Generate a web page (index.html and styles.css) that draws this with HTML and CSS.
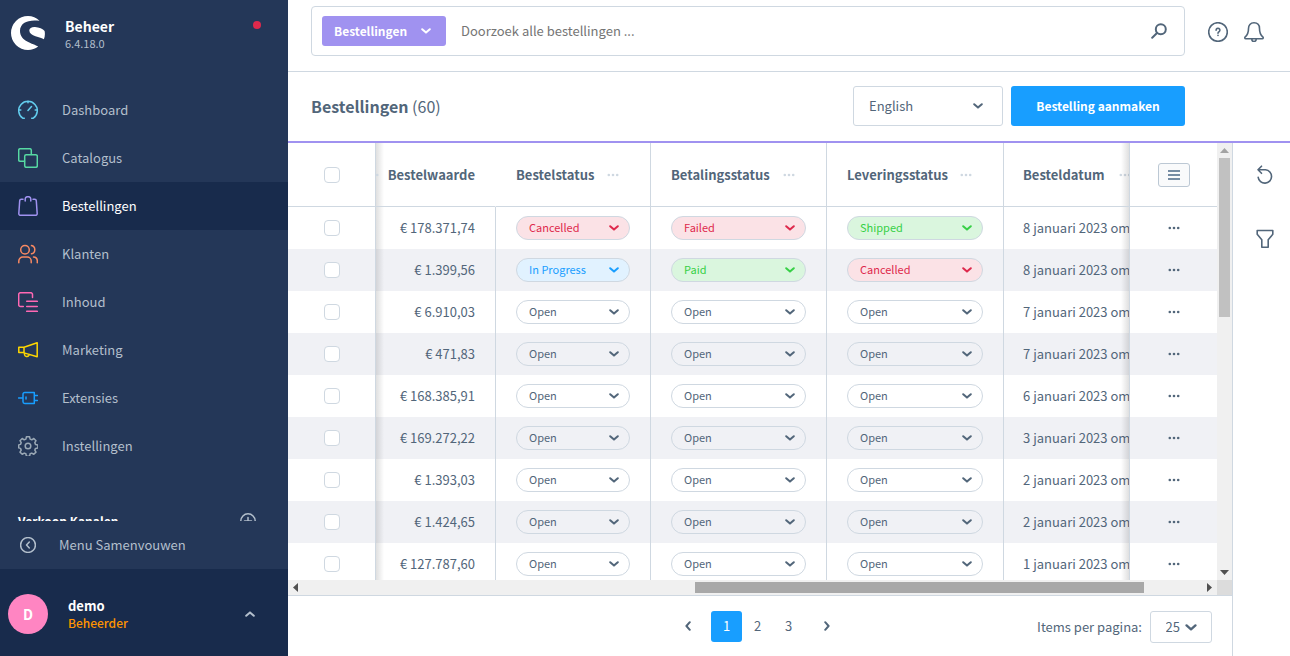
FILE: index.html
```html
<!DOCTYPE html>
<html lang="nl">
<head>
<meta charset="utf-8">
<title>Bestellingen</title>
<link rel="stylesheet" href="styles.css">
</head>
<body>
<svg class="sprite" aria-hidden="true">
  <symbol id="chev" viewBox="0 0 10 6"><path d="M1.200 1.200L5 4.600 8.800 1.200" fill="none" stroke="currentColor" stroke-width="2" stroke-linecap="round" stroke-linejoin="round"/></symbol>
  <symbol id="dots" viewBox="0 0 12 4"><circle cx="1.800" cy="2" r="1.300"/><circle cx="6" cy="2" r="1.300"/><circle cx="10.200" cy="2" r="1.300"/></symbol>
</svg>
<aside class="sidebar">
  <header class="brand">
    <svg class="logo" viewBox="0 0 34 34" fill="#fff"><path d="M28.500 4.800C25.500 1.800 21.400 0 17 0a17 17 0 0 0 0 34c3.900 0 7.300-1.300 10.200-3.500C22.500 27.500 9 25.500 9 15 9 6.500 17.500 3.300 28.500 4.800z"/><path d="M18.300 14.500c0-2.300 2.500-3.700 5.700-3.500 4 .3 8 2 9.600 4 .6 3 .3 6-.7 8.300-3-2-14.600-3.300-14.600-8.800z"/></svg>
    <div class="brand-text"><strong>Beheer</strong><span>6.4.18.0</span></div>
    <i class="status-dot"></i>
  </header>
  <nav class="nav">
    <a href="#"><svg class="c-cyan" viewBox="0 0 20 20"><path d="M6.300 18.200H4.700A9.300 9.300 0 1 1 15.300 18.200H13.700M1 10h1.800M17.200 10H19M10 1v1.800M10 10.500l3.500-4"/></svg>Dashboard</a>
    <a href="#"><svg class="c-green" viewBox="0 0 20 20"><rect x="6.700" y="6.700" width="12.600" height="12.600" rx="1.500"/><path d="M6.500 13.300H2.200A1.500 1.500 0 0 1 .7 11.800V2.200A1.500 1.500 0 0 1 2.200.7h9.600a1.500 1.500 0 0 1 1.500 1.500v4.300"/></svg>Catalogus</a>
    <a href="#" class="active"><svg class="c-purple" viewBox="0 0 20 20"><path d="M7.200 5V3a2.300 2.300 0 0 1 2.300-2.300h1A2.300 2.300 0 0 1 12.800 3v2M5 3.300H3.200A1.500 1.500 0 0 0 1.700 4.700L.8 17.700a1.500 1.500 0 0 0 1.500 1.600h15.400a1.500 1.500 0 0 0 1.500-1.600l-.9-13a1.500 1.500 0 0 0-1.500-1.400H15"/></svg>Bestellingen</a>
    <a href="#"><svg class="c-orange" viewBox="0 0 20 20"><circle cx="7" cy="5.700" r="4.300"/><path d="M.8 18.700V17a4 4 0 0 1 4-4h4.400a4 4 0 0 1 4 4v1.700M13.500 1.600a4.200 4.200 0 0 1 0 8.200M15.500 13a4 4 0 0 1 3.800 4v1.700"/></svg>Klanten</a>
    <a href="#"><svg class="c-pink" viewBox="0 0 20 20"><path d="M5.300 14.500H2.500A1.800 1.800 0 0 1 .7 12.700V2.500A1.800 1.800 0 0 1 2.500.7h10.200a1.800 1.800 0 0 1 1.800 1.800v3M8.700 9.300h10.600M8.700 14.500h10.600M8.700 19.300h10.600"/></svg>Inhoud</a>
    <a href="#"><svg class="c-yellow" viewBox="0 0 20 20"><path d="M6 7.300L19.200 2.700v14L6 12.900zM6 7.300H.8v5.300H6M6.500 13v1.500a2.300 2.300 0 0 0 4.300.9l.4-1"/></svg>Marketing</a>
    <a href="#"><svg class="c-blue" viewBox="0 0 20 20"><path d="M.5 10h4M5 6.200a1.700 1.700 0 0 1 1.700-1.700h9.600v11H6.700A1.700 1.700 0 0 1 5 13.800zM8 9v2M16.500 7.500h3M16.500 12.500h3"/></svg>Extensies</a>
    <a href="#"><svg class="c-gray" viewBox="0 0 20 20"><circle cx="10" cy="10" r="2.800"/><path d="M8.400 .8h3.200l.5 2.300 1.700.7 2-1.300 2.200 2.200-1.200 2 .7 1.700 2.400.5v3l-2.400.5-.7 1.700 1.200 2-2.200 2.200-2-1.200-1.700.7-.5 2.400H8.400l-.5-2.400-1.700-.7-2 1.200L2 16.100l1.200-2-.7-1.700-1.800-.5v-3l1.800-.5.7-1.700L2 4.700l2.200-2.200 2 1.300 1.700-.7z"/></svg>Instellingen</a>
    <div class="channels"><strong>Verkoop Kanalen</strong><svg viewBox="0 0 16 16"><circle cx="8" cy="8" r="7.200"/><path d="M8 4.500v7M4.500 8h7"/></svg></div>
  </nav>
  <button class="collapse"><svg viewBox="0 0 16 16"><circle cx="8" cy="8" r="7.400"/><path d="M9.300 5L6.500 8l2.800 3"/></svg>Menu Samenvouwen</button>
  <footer class="user">
    <span class="avatar">D</span>
    <div class="user-text"><strong>demo</strong><span>Beheerder</span></div>
    <svg class="chev up"><use href="#chev"/></svg>
  </footer>
</aside>
<main class="main">
  <header class="topbar">
    <form class="search">
      <button type="button" class="scope">Bestellingen<svg class="chev"><use href="#chev"/></svg></button>
      <input type="search" aria-label="Zoeken" placeholder="Doorzoek alle bestellingen ...">
      <svg class="loupe" viewBox="0 0 16 16"><circle cx="9.800" cy="6.200" r="5"/><path d="M6 10L1.200 14.800"/></svg>
    </form>
    <div class="top-icons">
      <svg viewBox="0 0 20 20"><circle cx="10" cy="10" r="9.300"/><path d="M8.100 8.200a1.900 1.900 0 1 1 2.900 1.600c-.7.400-1 .7-1 1.400M10 13.300v.2"/></svg>
      <svg viewBox="0 0 20 20"><path d="M10 .8c3.600 0 5.500 2.500 5.500 5.700 0 5 1 6.500 3.200 8.300.9.900.6 2-.5 2H1.800c-1.100 0-1.400-1.100-.5-2 2.200-1.800 3.200-3.300 3.200-8.300C4.500 3.300 6.400.8 10 .8zM7.800 17.300a2.200 2.200 0 0 0 4.400 0"/></svg>
    </div>
  </header>
  <header class="smartbar">
    <h1>Bestellingen <span>(60)</span></h1>
    <label class="lang"><select aria-label="Taal"><option>English</option></select><svg class="chev"><use href="#chev"/></svg></label>
    <button class="primary">Bestelling aanmaken</button>
  </header>
  <div class="content">
    <section class="panel">
      <div class="grid-area">
        <div class="grid-view">
          <table class="grid">
            <colgroup><col class="w-check"><col class="w-amount"><col class="w-order"><col class="w-pay"><col class="w-ship"><col class="w-date"><col class="w-act"></colgroup>
            <thead><tr>
              <th class="check"><input type="checkbox" aria-label="Alles selecteren"></th>
              <th class="amount"><svg class="dots stray"><use href="#dots"/></svg>Bestelwaarde</th>
              <th><div class="th">Bestelstatus<svg class="dots"><use href="#dots"/></svg></div></th>
              <th><div class="th">Betalingsstatus<svg class="dots"><use href="#dots"/></svg></div></th>
              <th><div class="th">Leveringsstatus<svg class="dots"><use href="#dots"/></svg></div></th>
              <th class="date"><div class="th">Besteldatum<svg class="dots"><use href="#dots"/></svg></div></th>
              <th class="act"><button class="columns" aria-label="Kolommen"><svg viewBox="0 0 12 10"><path d="M0 1h12M0 5h12M0 9h12"/></svg></button></th>
            </tr></thead>
            <tbody>
              <tr><td class="check"><input type="checkbox" aria-label="Selecteer"></td><td class="amount">€ 178.371,74</td><td><label class="pill red"><select aria-label="Bestelstatus"><option>Cancelled</option></select><svg class="chev"><use href="#chev"/></svg></label></td><td><label class="pill red"><select aria-label="Betalingsstatus"><option>Failed</option></select><svg class="chev"><use href="#chev"/></svg></label></td><td><label class="pill green"><select aria-label="Leveringsstatus"><option>Shipped</option></select><svg class="chev"><use href="#chev"/></svg></label></td><td class="date">8 januari 2023 om</td><td class="act"><button aria-label="Acties"><svg class="dots"><use href="#dots"/></svg></button></td></tr>
              <tr><td class="check"><input type="checkbox" aria-label="Selecteer"></td><td class="amount">€ 1.399,56</td><td><label class="pill blue"><select aria-label="Bestelstatus"><option>In Progress</option></select><svg class="chev"><use href="#chev"/></svg></label></td><td><label class="pill green"><select aria-label="Betalingsstatus"><option>Paid</option></select><svg class="chev"><use href="#chev"/></svg></label></td><td><label class="pill red"><select aria-label="Leveringsstatus"><option>Cancelled</option></select><svg class="chev"><use href="#chev"/></svg></label></td><td class="date">8 januari 2023 om</td><td class="act"><button aria-label="Acties"><svg class="dots"><use href="#dots"/></svg></button></td></tr>
              <tr><td class="check"><input type="checkbox" aria-label="Selecteer"></td><td class="amount">€ 6.910,03</td><td><label class="pill"><select aria-label="Bestelstatus"><option>Open</option></select><svg class="chev"><use href="#chev"/></svg></label></td><td><label class="pill"><select aria-label="Betalingsstatus"><option>Open</option></select><svg class="chev"><use href="#chev"/></svg></label></td><td><label class="pill"><select aria-label="Leveringsstatus"><option>Open</option></select><svg class="chev"><use href="#chev"/></svg></label></td><td class="date">7 januari 2023 om</td><td class="act"><button aria-label="Acties"><svg class="dots"><use href="#dots"/></svg></button></td></tr>
              <tr><td class="check"><input type="checkbox" aria-label="Selecteer"></td><td class="amount">€ 471,83</td><td><label class="pill"><select aria-label="Bestelstatus"><option>Open</option></select><svg class="chev"><use href="#chev"/></svg></label></td><td><label class="pill"><select aria-label="Betalingsstatus"><option>Open</option></select><svg class="chev"><use href="#chev"/></svg></label></td><td><label class="pill"><select aria-label="Leveringsstatus"><option>Open</option></select><svg class="chev"><use href="#chev"/></svg></label></td><td class="date">7 januari 2023 om</td><td class="act"><button aria-label="Acties"><svg class="dots"><use href="#dots"/></svg></button></td></tr>
              <tr><td class="check"><input type="checkbox" aria-label="Selecteer"></td><td class="amount">€ 168.385,91</td><td><label class="pill"><select aria-label="Bestelstatus"><option>Open</option></select><svg class="chev"><use href="#chev"/></svg></label></td><td><label class="pill"><select aria-label="Betalingsstatus"><option>Open</option></select><svg class="chev"><use href="#chev"/></svg></label></td><td><label class="pill"><select aria-label="Leveringsstatus"><option>Open</option></select><svg class="chev"><use href="#chev"/></svg></label></td><td class="date">6 januari 2023 om</td><td class="act"><button aria-label="Acties"><svg class="dots"><use href="#dots"/></svg></button></td></tr>
              <tr><td class="check"><input type="checkbox" aria-label="Selecteer"></td><td class="amount">€ 169.272,22</td><td><label class="pill"><select aria-label="Bestelstatus"><option>Open</option></select><svg class="chev"><use href="#chev"/></svg></label></td><td><label class="pill"><select aria-label="Betalingsstatus"><option>Open</option></select><svg class="chev"><use href="#chev"/></svg></label></td><td><label class="pill"><select aria-label="Leveringsstatus"><option>Open</option></select><svg class="chev"><use href="#chev"/></svg></label></td><td class="date">3 januari 2023 om</td><td class="act"><button aria-label="Acties"><svg class="dots"><use href="#dots"/></svg></button></td></tr>
              <tr><td class="check"><input type="checkbox" aria-label="Selecteer"></td><td class="amount">€ 1.393,03</td><td><label class="pill"><select aria-label="Bestelstatus"><option>Open</option></select><svg class="chev"><use href="#chev"/></svg></label></td><td><label class="pill"><select aria-label="Betalingsstatus"><option>Open</option></select><svg class="chev"><use href="#chev"/></svg></label></td><td><label class="pill"><select aria-label="Leveringsstatus"><option>Open</option></select><svg class="chev"><use href="#chev"/></svg></label></td><td class="date">2 januari 2023 om</td><td class="act"><button aria-label="Acties"><svg class="dots"><use href="#dots"/></svg></button></td></tr>
              <tr><td class="check"><input type="checkbox" aria-label="Selecteer"></td><td class="amount">€ 1.424,65</td><td><label class="pill"><select aria-label="Bestelstatus"><option>Open</option></select><svg class="chev"><use href="#chev"/></svg></label></td><td><label class="pill"><select aria-label="Betalingsstatus"><option>Open</option></select><svg class="chev"><use href="#chev"/></svg></label></td><td><label class="pill"><select aria-label="Leveringsstatus"><option>Open</option></select><svg class="chev"><use href="#chev"/></svg></label></td><td class="date">2 januari 2023 om</td><td class="act"><button aria-label="Acties"><svg class="dots"><use href="#dots"/></svg></button></td></tr>
              <tr><td class="check"><input type="checkbox" aria-label="Selecteer"></td><td class="amount">€ 127.787,60</td><td><label class="pill"><select aria-label="Bestelstatus"><option>Open</option></select><svg class="chev"><use href="#chev"/></svg></label></td><td><label class="pill"><select aria-label="Betalingsstatus"><option>Open</option></select><svg class="chev"><use href="#chev"/></svg></label></td><td><label class="pill"><select aria-label="Leveringsstatus"><option>Open</option></select><svg class="chev"><use href="#chev"/></svg></label></td><td class="date">1 januari 2023 om</td><td class="act"><button aria-label="Acties"><svg class="dots"><use href="#dots"/></svg></button></td></tr>
            </tbody>
          </table>
        </div>
        <div class="vbar"><svg viewBox="0 0 9 5" fill="#a3a3a3"><path d="M0 5L4.500 0 9 5z"/></svg><div class="vtrack"><i></i></div><svg viewBox="0 0 9 5" fill="#505050"><path d="M0 0h9L4.500 5z"/></svg></div>
        <div class="hbar"><svg viewBox="0 0 5 9" fill="#505050"><path d="M5 0v9L0 4.500z"/></svg><div class="htrack"><i></i></div><svg viewBox="0 0 5 9" fill="#505050"><path d="M0 0v9l5-4.500z"/></svg></div>
        <div class="corner"></div>
      </div>
      <footer class="pager">
        <div class="pages">
          <button class="arrow" aria-label="Vorige"><svg class="chev left"><use href="#chev"/></svg></button>
          <button class="current">1</button><button>2</button><button>3</button>
          <button class="arrow" aria-label="Volgende"><svg class="chev right"><use href="#chev"/></svg></button>
        </div>
        <div class="per-page"><label for="pp">Items per pagina:</label><span class="pp"><select id="pp"><option>25</option></select><svg class="chev"><use href="#chev"/></svg></span></div>
      </footer>
    </section>
    <aside class="tools">
      <button aria-label="Vernieuwen"><svg viewBox="0 0 18 20"><path d="M5.500 1.200L2 4.800l3.500 3.500M2 4.800h7.500a6.700 6.700 0 1 1-7.300 7.500"/></svg></button>
      <button aria-label="Filter"><svg viewBox="0 0 18 20"><path d="M1.200 1.500h15.600v3.800l-4.600 5.500v7.400H5.800v-7.400L1.200 5.300z"/></svg></button>
    </aside>
  </div>
</main>
</body>
</html>
```
FILE: styles.css
```css
* { box-sizing: border-box; }
body { margin: 0; height: 100vh; display: flex; overflow: hidden; background: #fff; color: #52667a; font: 14px/20px "Noto Sans CJK SC", "Open Sans", sans-serif; }
button, select, input { font: inherit; color: inherit; }
button { border: 0; background: none; padding: 0; cursor: pointer; }
select { appearance: none; border: 0; background: none; padding: 0; outline: 0; }
strong, th { font-weight: 700; }
svg { flex: none; display: block; }
.sprite { position: absolute; width: 0; height: 0; }
.chev { width: 10px; height: 6px; pointer-events: none; }
.dots { width: 12px; height: 4px; fill: currentColor; }
.up { transform: rotate(180deg); }
.left { transform: rotate(90deg); }
.right { transform: rotate(-90deg); }

.sidebar { width: 288px; flex: none; display: flex; flex-direction: column; background: #243758; color: #b3bfcc; }
.brand { display: flex; align-items: flex-start; padding: 16px 27px 0 11px; height: 86px; flex: none; }
.logo { width: 34px; height: 34px; }
.brand-text { display: flex; flex-direction: column; flex: 1; padding-left: 20px; }
.brand-text strong { color: #fff; line-height: 20px; }
.brand-text span { font-size: 11px; line-height: 14px; }
.status-dot { width: 8px; height: 8px; border-radius: 50%; background: #de294c; margin-top: 5px; }
.nav { flex: 1; min-height: 0; overflow: hidden; }
.nav a { display: flex; align-items: center; gap: 24px; height: 48px; padding-left: 18px; font-size: 13px; color: inherit; text-decoration: none; }
.nav a.active { background: #182b4c; color: #fff; }
.nav svg, .collapse svg { width: 20px; height: 20px; fill: none; stroke: currentColor; stroke-width: 1.5; stroke-linecap: round; stroke-linejoin: round; }
.nav .c-cyan { color: #63cdee; }
.nav .c-green { color: #57d9a3; }
.nav .c-purple { color: #a092f0; }
.nav .c-orange { color: #f88962; }
.nav .c-pink { color: #ff68b4; }
.nav .c-yellow { color: #ffd700; }
.nav .c-blue { color: #189eff; }
.nav .c-gray { color: #9aa8b5; }
.channels { display: flex; justify-content: space-between; padding: 41px 32px 0 18px; color: #fff; font-size: 12px; }
.nav .channels svg { width: 16px; height: 16px; margin-top: 2px; color: #b3bfcc; }
.collapse { display: flex; align-items: center; gap: 23px; height: 48px; padding-left: 20px; font-size: 13px; flex: none; }
.collapse svg { width: 16px; height: 16px; }
.user { display: flex; align-items: center; height: 87px; padding: 2px 33px 0 8px; background: #182b4c; flex: none; }
.avatar { width: 40px; height: 40px; border-radius: 50%; background: #ff85c2; color: #fff; display: flex; align-items: center; justify-content: center; font-weight: 700; }
.user-text { flex: 1; display: flex; flex-direction: column; padding-left: 20px; font-size: 13px; line-height: 17px; color: #fff; }
.user-text span { font-size: 12px; font-weight: 500; color: #ff9500; }

.main { flex: 1; min-width: 0; display: flex; flex-direction: column; }
.topbar { display: flex; align-items: flex-start; padding: 6px 26px 0 23px; height: 72px; border-bottom: 1px solid #cfd8e1; flex: none; }
.search { flex: 1; height: 50px; display: flex; align-items: center; border: 1px solid #cfd8e1; border-radius: 4px; padding: 0 17px 0 10px; }
.scope { display: flex; align-items: center; justify-content: space-between; width: 124px; height: 30px; padding: 0 15px 0 12px; border-radius: 3px; background: #a092f0; color: #fff; font-size: 12px; font-weight: 700; }
.search input { flex: 1; border: 0; outline: 0; padding: 0 0 0 15px; background: none; font-size: 13px; }
.search input::placeholder { color: #757575; }
.loupe { width: 16px; height: 16px; fill: none; stroke: currentColor; stroke-width: 2; stroke-linecap: round; }
.top-icons { display: flex; gap: 16px; padding: 16px 0 0 23px; }
.top-icons svg { width: 20px; height: 20px; fill: none; stroke: currentColor; stroke-width: 1.6; stroke-linecap: round; stroke-linejoin: round; }
.smartbar { display: flex; align-items: center; gap: 8px; height: 71px; padding: 0 105px 1px 23px; border-bottom: 2px solid #a092f0; flex: none; }
h1 { flex: 1; margin: 0; font-size: 16px; font-weight: 700; }
h1 span { font-weight: 400; }
.lang { display: flex; align-items: center; width: 150px; height: 40px; border: 1px solid #cfd8e1; border-radius: 3px; padding: 0 19px 0 15px; font-size: 13px; }
.lang select { flex: 1; }
.primary { width: 174px; height: 40px; border-radius: 3px; background: #189eff; color: #fff; font-size: 12px; font-weight: 700; }

.content { flex: 1; min-height: 0; display: flex; }
.panel { flex: 1; min-width: 0; display: flex; flex-direction: column; border-right: 1px solid #cfd8e1; }
.grid-area { flex: 1; min-height: 0; display: grid; grid-template: minmax(0, 1fr) 15px / minmax(0, 1fr) 15px; border-bottom: 1px solid #cfd8e1; }
.grid-view { overflow: hidden; }
.grid { width: 100%; table-layout: fixed; border-collapse: separate; border-spacing: 0; font-size: 13px; }
.w-check { width: 88px; }
.w-act { width: 87px; }
.w-amount { width: 120px; }
.w-order { width: 155px; }
.w-pay { width: 176px; }
.w-ship { width: 177px; }
th { height: 64px; padding: 0 0 0 20px; border-right: 1px solid #cfd8e1; border-bottom: 1px solid #cfd8e1; text-align: left; white-space: nowrap; }
td { height: 42px; padding: 0 20px; border-right: 1px solid #cfd8e1; white-space: nowrap; }
tbody tr:nth-child(even) td { background: #f0f1f5; }
.grid .amount { text-align: right; padding: 0 20px 0 0; position: relative; }
th.amount { border-right-color: transparent; }
.grid .date { overflow: hidden; padding: 0 0 0 19px; position: relative; }
.amount::before, .date::after { content: ""; position: absolute; top: 0; bottom: 0; width: 8px; }
.amount::before { left: 0; background: linear-gradient(to right, rgba(80, 80, 80, .18), rgba(80, 80, 80, 0)); }
.date::after { right: 0; background: linear-gradient(to left, rgba(80, 80, 80, .18), rgba(80, 80, 80, 0)); }
.grid .check, .grid .act { padding: 0; text-align: center; }
.grid .act { border-right: 0; }
.th { display: flex; align-items: center; justify-content: space-between; padding-right: 31px; }
.date .th { justify-content: flex-start; gap: 14px; padding: 0; }
th .dots { color: #cfd8e1; }
.stray { position: absolute; left: -9px; top: 30px; clip-path: inset(0 0 0 8px); }
input[type="checkbox"] { appearance: none; display: block; width: 16px; height: 16px; margin: 0 auto; border: 1px solid #cfd8e1; border-radius: 4px; background: #fff; }
.pill { display: flex; align-items: center; height: 24px; padding: 0 10px 0 12px; border: 1px solid #cfd8e1; border-radius: 12px; font-size: 11px; line-height: 16px; }
.pill select { flex: 1; min-width: 0; padding-bottom: 2px; }
.pill.red { background: #fbe2e6; color: #de294c; }
.pill.green { background: #daf6de; color: #37d046; }
.pill.blue { background: #e1f2ff; color: #189eff; }
.columns { display: inline-flex; align-items: center; justify-content: center; width: 32px; height: 24px; border: 1px solid #bcc8d4; border-radius: 3px; background: #f9fafb; vertical-align: middle; }
.columns svg { width: 12px; height: 10px; stroke: #758ca3; stroke-width: 2; }
td.act button { display: block; margin: 0 auto; }
.vbar, .hbar { display: flex; align-items: center; background: #f0f0f0; }
.vbar { flex-direction: column; padding: 5px 0; gap: 5px; }
.vbar svg { width: 9px; height: 5px; }
.vtrack { flex: 1; width: 11px; }
.vtrack i { display: block; height: 39%; background: #c1c1c1; }
.hbar { padding: 0 5px; gap: 5px; }
.hbar svg { width: 5px; height: 9px; }
.htrack { flex: 1; height: 11px; }
.htrack i { display: block; height: 100%; width: 50%; margin-left: 43.6%; background: #a8a8a8; }
.corner { background: #dcdcdc; }
.pager { height: 60px; flex: none; display: flex; align-items: center; padding: 0 20px; font-size: 13px; }
.pages { flex: 1; display: flex; justify-content: center; padding-left: 170px; }
.pages button { width: 31px; height: 31px; border-radius: 3px; }
.pages .current { background: #189eff; color: #fff; }
.pages .arrow { display: flex; align-items: center; justify-content: center; width: 46px; }
.per-page { display: flex; align-items: center; gap: 8px; padding-top: 2px; }
.pp { display: flex; align-items: center; justify-content: center; gap: 4px; width: 62px; height: 32px; border: 1px solid #cfd8e1; border-radius: 3px; }
.pp .chev { width: 12px; height: 7px; }
.tools { width: 57px; flex: none; display: flex; flex-direction: column; }
.tools button { display: flex; align-items: center; justify-content: center; height: 64px; padding-left: 6px; }
.tools svg { width: 18px; height: 20px; fill: none; stroke: currentColor; stroke-width: 1.6; stroke-linecap: round; stroke-linejoin: round; }
```
